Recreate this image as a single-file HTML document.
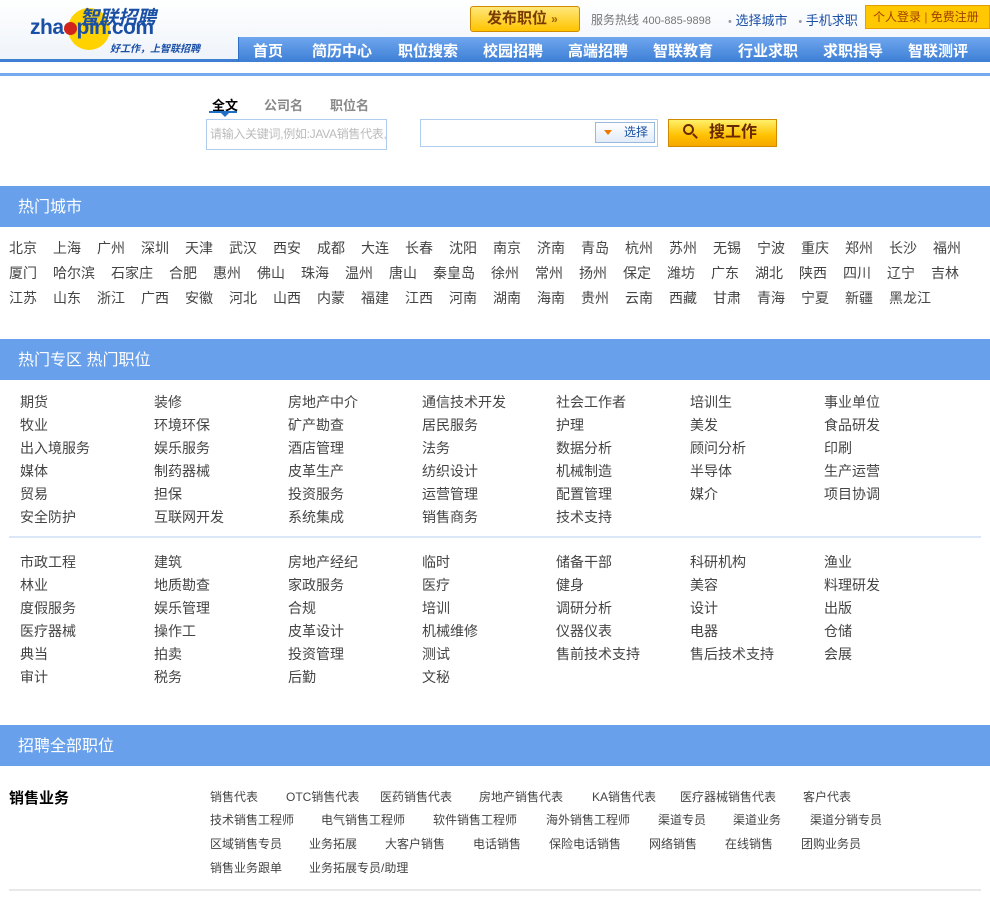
<!DOCTYPE html>
<html><head><meta charset="utf-8">
<style>
*{margin:0;padding:0;box-sizing:border-box}
body{width:990px;height:900px;overflow:hidden;background:#fff;font-family:"Liberation Sans","Noto Sans CJK SC","WenQuanYi Zen Hei",sans-serif;color:#333;position:relative}
.a{position:absolute;white-space:nowrap}
.top{position:absolute;left:0;top:0;width:990px;height:62px;background:linear-gradient(#fff,#eef3fa)}
.nav{position:absolute;left:238px;top:37px;width:752px;height:25px;background:linear-gradient(#6fa6ee,#3d7fd6);border-left:1px solid #2f6fc6}
.nav span{position:absolute;top:3px;color:#fff;font-weight:bold;font-size:15px}
.bar{position:absolute;left:0;width:990px;height:41px;background:#68a0ec;color:#fff;font-size:16px;line-height:43px;padding-left:18px}
.city{position:absolute;left:9px;font-size:14px;color:#444;line-height:25px}
.city span{margin-right:16px}
.g{position:absolute;font-size:14px;color:#444}
.s{position:absolute;font-size:12px;color:#444}
</style></head><body>
<div class="top"></div>
<div class="a" style="left:0;top:59px;width:238px;height:3px;background:#3f7fd3"></div>
<div class="a" style="left:0;top:73px;width:990px;height:3px;background:#76a9ee"></div>
<!-- logo -->
<div class="a" style="left:68px;top:8px;width:42px;height:42px;border-radius:50%;background:#ffd200"></div>
<div class="a" style="left:80px;top:3px;font-size:19px;font-weight:bold;color:#1a4fa6;font-style:italic">智联招聘</div>
<div class="a" style="left:30px;top:16px;font-size:21px;font-weight:bold;color:#1a4fa6;letter-spacing:-0.5px">zha<span style="display:inline-block;width:13px;height:13px;border-radius:50%;background:#d0231b;vertical-align:-1px"></span>pin.com</div>
<div class="a" style="left:110px;top:40px;font-size:10px;font-weight:bold;font-style:italic;color:#1a4fa6">好工作，上智联招聘</div>
<!-- post job button -->
<div class="a" style="left:470px;top:6px;width:110px;height:26px;border:1px solid #d08a00;border-radius:3px;background:linear-gradient(#ffe77a,#ffc400);font-size:15px;font-weight:bold;color:#7a3a00;line-height:24px;padding-left:16px">发布职位 <span style="font-size:12px;color:#a06000">»</span></div>
<div class="a" style="left:591px;top:11px;font-size:12px;color:#777">服务热线 <span style="font-size:11px">400-885-9898</span></div>
<div class="a" style="left:728px;top:10px;font-size:13px;color:#1a4fa6"><span style="color:#99a;font-size:11px">•</span> 选择城市 &nbsp; <span style="color:#99a;font-size:11px">•</span> 手机求职</div>
<div class="a" style="left:865px;top:5px;width:125px;height:24px;background:#ffc800;border:1px solid #e0a000;font-size:12px;color:#a04000;line-height:22px;padding-left:7px">个人登录 <span style="color:#c06000">|</span> 免费注册</div>
<div class="nav">
<span style="left:14px">首页</span><span style="left:73px">简历中心</span><span style="left:159px">职位搜索</span><span style="left:244px">校园招聘</span><span style="left:329px">高端招聘</span><span style="left:414px">智联教育</span><span style="left:499px">行业求职</span><span style="left:584px">求职指导</span><span style="left:669px">智联测评</span>
</div>
<!-- search -->
<div class="a" style="left:212px;top:95px;font-size:13px;font-weight:bold;color:#000">全文</div>
<div class="a" style="left:209px;top:111px;width:28px;height:2px;background:#1f6fc6"></div>
<div class="a" style="left:221px;top:113px;width:0;height:0;border-left:4px solid transparent;border-right:4px solid transparent;border-top:4px solid #1f6fc6"></div>
<div class="a" style="left:264px;top:95px;font-size:13px;font-weight:bold;color:#888">公司名</div>
<div class="a" style="left:330px;top:95px;font-size:13px;font-weight:bold;color:#888">职位名</div>
<div class="a" style="left:206px;top:119px;width:181px;height:31px;border:1px solid #b0cdf0;font-size:12px;color:#bbb;line-height:29px;padding-left:3px;overflow:hidden;letter-spacing:-0.3px">请输入关键词,例如:JAVA销售代表,行政</div>
<div class="a" style="left:420px;top:119px;width:238px;height:28px;border:1px solid #b0cdf0"></div>
<div class="a" style="left:595px;top:122px;width:60px;height:21px;border:1px solid #9ab8dc;background:linear-gradient(#fff,#e2ecf8);font-size:12px;color:#1a4fa6;line-height:19px;padding-left:28px">选择</div>
<div class="a" style="left:604px;top:130px;width:0;height:0;border-left:4px solid transparent;border-right:4px solid transparent;border-top:5px solid #f07800"></div>
<div class="a" style="left:668px;top:119px;width:109px;height:28px;border:1px solid #d08a00;background:linear-gradient(#fff06a,#ffc000 60%,#f5a800);font-size:16px;font-weight:bold;color:#6a2a00;line-height:26px;padding-left:40px">搜工作</div>
<div class="a" style="left:683px;top:124px;width:11px;height:11px;border:2px solid #6a2a00;border-radius:50%"></div>
<div class="a" style="left:692px;top:135px;width:6px;height:2px;background:#6a2a00;transform:rotate(45deg)"></div>
<!-- hot cities -->
<div class="bar" style="top:186px">热门城市</div>
<div class="city" style="top:236px"><span>北京</span><span>上海</span><span>广州</span><span>深圳</span><span>天津</span><span>武汉</span><span>西安</span><span>成都</span><span>大连</span><span>长春</span><span>沈阳</span><span>南京</span><span>济南</span><span>青岛</span><span>杭州</span><span>苏州</span><span>无锡</span><span>宁波</span><span>重庆</span><span>郑州</span><span>长沙</span><span>福州</span></div>
<div class="city" style="top:261px"><span>厦门</span><span>哈尔滨</span><span>石家庄</span><span>合肥</span><span>惠州</span><span>佛山</span><span>珠海</span><span>温州</span><span>唐山</span><span>秦皇岛</span><span>徐州</span><span>常州</span><span>扬州</span><span>保定</span><span>潍坊</span><span>广东</span><span>湖北</span><span>陕西</span><span>四川</span><span>辽宁</span><span>吉林</span></div>
<div class="city" style="top:286px"><span>江苏</span><span>山东</span><span>浙江</span><span>广西</span><span>安徽</span><span>河北</span><span>山西</span><span>内蒙</span><span>福建</span><span>江西</span><span>河南</span><span>湖南</span><span>海南</span><span>贵州</span><span>云南</span><span>西藏</span><span>甘肃</span><span>青海</span><span>宁夏</span><span>新疆</span><span>黑龙江</span></div>
<!-- hot areas -->
<div class="bar" style="top:339px">热门专区 热门职位</div>
<div id="grid"></div>
<div class="a" style="left:9px;top:536px;width:972px;height:2px;background:#dbe7f7"></div>
<script>
var cols=[20,154,288,422,556,690,824];
var b1=[["期货","装修","房地产中介","通信技术开发","社会工作者","培训生","事业单位"],["牧业","环境环保","矿产勘查","居民服务","护理","美发","食品研发"],["出入境服务","娱乐服务","酒店管理","法务","数据分析","顾问分析","印刷"],["媒体","制药器械","皮革生产","纺织设计","机械制造","半导体","生产运营"],["贸易","担保","投资服务","运营管理","配置管理","媒介","项目协调"],["安全防护","互联网开发","系统集成","销售商务","技术支持"]];
var b2=[["市政工程","建筑","房地产经纪","临时","储备干部","科研机构","渔业"],["林业","地质勘查","家政服务","医疗","健身","美容","料理研发"],["度假服务","娱乐管理","合规","培训","调研分析","设计","出版"],["医疗器械","操作工","皮革设计","机械维修","仪器仪表","电器","仓储"],["典当","拍卖","投资管理","测试","售前技术支持","售后技术支持","会展"],["审计","税务","后勤","文秘"]];
var h="";
function put(b,y0){b.forEach(function(r,i){r.forEach(function(t,j){h+='<div class="g" style="left:'+cols[j]+'px;top:'+(y0+i*23)+'px">'+t+'</div>';});});}
put(b1,392);put(b2,552);
var s=[[796,[[210,"销售代表"],[286,"OTC销售代表"],[380,"医药销售代表"],[479,"房地产销售代表"],[592,"KA销售代表"],[680,"医疗器械销售代表"],[803,"客户代表"]]],
[819,[[210,"技术销售工程师"],[321,"电气销售工程师"],[433,"软件销售工程师"],[546,"海外销售工程师"],[658,"渠道专员"],[733,"渠道业务"],[810,"渠道分销专员"]]],
[843,[[210,"区域销售专员"],[309,"业务拓展"],[385,"大客户销售"],[473,"电话销售"],[549,"保险电话销售"],[649,"网络销售"],[725,"在线销售"],[801,"团购业务员"]]],
[867,[[210,"销售业务跟单"],[309,"业务拓展专员/助理"]]]];
s.forEach(function(r){r[1].forEach(function(p){h+='<div class="s" style="left:'+p[0]+'px;top:'+(r[0]-8)+'px">'+p[1]+'</div>';});});
document.getElementById("grid").innerHTML=h;
</script>
<!-- all jobs -->
<div class="bar" style="top:725px">招聘全部职位</div>
<div class="a" style="left:9px;top:787px;font-size:15px;font-weight:bold;color:#000">销售业务</div>
<div class="a" style="left:9px;top:889px;width:972px;height:2px;background:#e8e8e8"></div>
</body></html>
